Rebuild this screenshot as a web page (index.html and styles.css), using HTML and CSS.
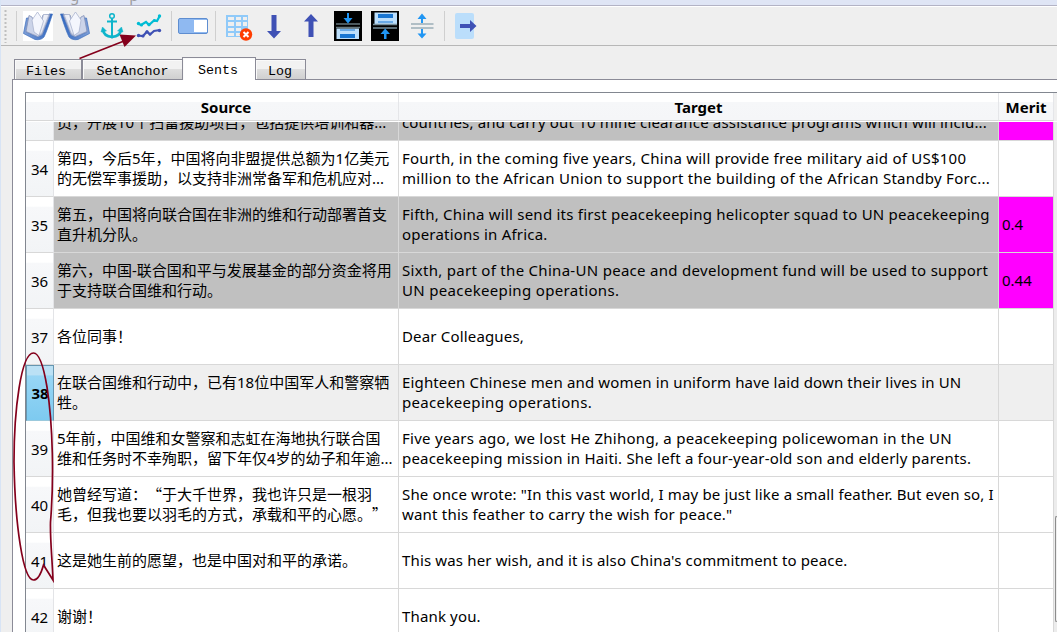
FILE: index.html
```
<!DOCTYPE html>
<html lang="zh-CN">
<head>
<meta charset="utf-8">
<title>Sents</title>
<link rel="stylesheet" href="styles.css">
</head>
<body>
<div class="window">
  <div class="titlebar"><span>g</span><span>p</span></div>
  <div class="toolbar">
    <svg width="1057" height="38" viewBox="0 8 1057 38">
      <defs>
        <linearGradient id="page" x1="0" y1="0" x2="1" y2="1"><stop offset="0" stop-color="#fff"/><stop offset="1" stop-color="#cfd5ea"/></linearGradient>
        <linearGradient id="cover" x1="0" y1="0" x2="1" y2="0"><stop offset="0" stop-color="#7f9fd6"/><stop offset="1" stop-color="#2f66c0"/></linearGradient>
        <g id="book">
          <path d="M26.500 18 L23.500 33.500 L35 39.500 Q41 40.500 44 37 Q47 31 52.500 14 L49 14 L42 35 L38 37 L27 32.500 L29 18Z" fill="url(#cover)" stroke="#3d6fbd" stroke-width=".7"/>
          <path d="M29 15.500 L26 31.500 L37.500 36.500 L42 34.500 L50 14.500 L43 15 L38 30 L32 17Z" fill="#ccd4e9" stroke="#8391b8" stroke-width=".8"/>
          <path d="M43.500 14.500 L49 14.500 L42 33 L38.500 35.500Z" fill="url(#page)" stroke="#99a5c5" stroke-width=".6"/>
          <path d="M37.500 12 L43.500 21 L39 35.500 L34 32 L32 20Z" fill="#f4f6fd" stroke="#a3adca" stroke-width=".7"/>
        </g>
      </defs>
      <path d="M5.500 10V43" stroke="#bfbfbf" stroke-width="2" stroke-dasharray="2 2"/>
      <path d="M16.500 11V41M171.500 11V41M215.500 11V41M444.500 11V41" stroke="#cfcfcf"/>
      <rect x="23" y="11" width="30" height="30" fill="#fff"/>
      <use href="#book"/>
      <use href="#book" transform="translate(113 0) scale(-1 1)"/>
      <g fill="none" stroke="#0eb5cb" stroke-width="2">
        <circle cx="112" cy="16" r="2.300" stroke-width="1.500"/>
        <path d="M112 18.500V36M107 21.500H117" />
        <path d="M103 30C103.500 34 107 36.500 112 37C117 36.500 120.500 34 121 30" stroke-width="2.600"/>
        <path d="M101 32L102.500 27L106.500 31ZM123 32L121.500 27L117.500 31Z" fill="#0eb5cb" stroke-width=".5"/>
        <path d="M109.500 36L112 38.500L114.500 36Z" fill="#0eb5cb" stroke-width=".5"/>
      </g>
      <g fill="none" stroke-width="2.200">
        <path d="M138 23.500L141 25L146 22L149 25L154 20.500L157 21L160 15.500" stroke="#00bcd4"/>
        <path d="M138 35.500L143 36L147 31.500L150 34.500L154 31L160 30" stroke="#3f51b5"/>
      </g>
      <g fill="#00bcd4"><circle cx="138.500" cy="23.500" r="1.700"/><circle cx="141.500" cy="25" r="1.500"/><circle cx="149" cy="24.500" r="1.700"/><circle cx="154.500" cy="20.500" r="1.500"/><circle cx="159.500" cy="16" r="1.700"/></g>
      <g fill="#3f51b5"><circle cx="138.500" cy="35.500" r="1.700"/><circle cx="143" cy="36" r="1.500"/><circle cx="147" cy="32" r="1.700"/><circle cx="150" cy="34" r="1.500"/><circle cx="159.500" cy="30.500" r="1.700"/></g>
      <rect x="178.500" y="18.500" width="29" height="15" rx="1.500" fill="#8fb9f1" stroke="#5e8dd0"/>
      <rect x="194" y="20" width="13" height="12" fill="#fff"/>
      <path d="M226 15H248V37H226Z M228 17V20H234V17ZM236 17V20H241V17ZM243 17V20H247V17ZM228 22V26H234V22ZM236 22V26H241V22ZM243 22V26H247V22ZM228 28V31H234V28ZM236 28V31H241V28ZM228 33V36H234V33ZM236 33V36H241V33Z" fill="#90caf9" fill-rule="evenodd"/>
      <circle cx="246" cy="34.500" r="6.200" fill="#ff3d00"/>
      <path d="M243.500 32L248.500 37M248.500 32L243.500 37" stroke="#fff" stroke-width="2"/>
      <path d="M271.500 15H276.500V31H281L274 38.500L267 31H271.500ZM308.500 37H313.500V21.500H318L311 14L304 21.500H308.500Z" fill="#3f51b5"/>
      <rect x="334" y="11" width="28" height="30"/>
      <path d="M336 24H360M336 27.500H360" stroke="#66777d" stroke-width="1.600"/>
      <path d="M336.500 28.500H359V39H336.500Z" fill="#bbdefb"/>
      <path d="M340 30H355" stroke="#1976d2"/><path d="M340 34H355V38H340Z" fill="#1976d2"/>
      <path d="M347 13H349V18H352.500L348 23.500L343.500 18H347Z" fill="#2196f3"/>
      <rect x="371" y="11" width="28" height="30"/>
      <path d="M374.500 12.500H397V24H374.500Z" fill="#bbdefb"/>
      <path d="M378 14H393V18H378Z" fill="#1976d2"/><path d="M378 22H393" stroke="#1976d2"/>
      <path d="M373 24.500H397M373 28H397" stroke="#78909c" stroke-width="1.600"/>
      <path d="M384 39H386.500V34H390L385.200 28.500L380.500 34H384Z" fill="#2196f3"/>
      <path d="M411 24H433.500M411 28H433.500" stroke="#b0bec5" stroke-width="2"/>
      <path d="M421 23V19H417.500L422 13.500L426.500 19H423V23ZM421 29V33.500H417.500L422 38.500L426.500 33.500H423V29Z" fill="#2196f3"/>
      <rect x="455" y="13" width="19" height="26" rx="2" fill="#bbdefb"/>
      <path d="M460 24H470V20L476.500 26L470 32V28H460Z" fill="#3f51b5"/>
    </svg>
  </div>
  <div class="tabs">
    <div class="tab files">Files</div>
    <div class="tab anchor">SetAnchor</div>
    <div class="tab active">Sents</div>
    <div class="tab log">Log</div>
  </div>
  <div class="pane">
    <div class="table">
      <div class="row head"><div class="num"></div><div class="src">Source</div><div class="tgt">Target</div><div class="merit">Merit</div><div class="corner"></div></div>
      <div class="viewport">
        <div class="rows">
          <div class="row low"><div class="num"></div><div class="src"><p>员，开展10个扫雷援助项目，包括提供培训和器...</p></div><div class="tgt"><p class="s17">countries, and carry out 10 mine clearance assistance programs which will inclu...</p></div><div class="merit"></div></div>
          <div class="row"><div class="num">34</div><div class="src"><p>第四，今后5年，中国将向非盟提供总额为1亿美元</p><p>的无偿军事援助，以支持非洲常备军和危机应对...</p></div><div class="tgt"><p class="s24">Fourth, in the coming five years, China will provide free military aid of US$100</p><p class="s27">million to the African Union to support the building of the African Standby Forc...</p></div><div class="merit"></div></div>
          <div class="row low"><div class="num">35</div><div class="src"><p>第五，中国将向联合国在非洲的维和行动部署首支</p><p>直升机分队。</p></div><div class="tgt"><p class="s24">Fifth, China will send its first peacekeeping helicopter squad to UN peacekeeping</p><p class="s20">operations in Africa.</p></div><div class="merit">0.4</div></div>
          <div class="row low"><div class="num">36</div><div class="src"><p>第六，中国-联合国和平与发展基金的部分资金将用</p><p>于支持联合国维和行动。</p></div><div class="tgt"><p class="s30">Sixth, part of the China-UN peace and development fund will be used to support</p><p class="s33">UN peacekeeping operations.</p></div><div class="merit">0.44</div></div>
          <div class="row"><div class="num">37</div><div class="src"><p>各位同事<span class="mid">！</span></p></div><div class="tgt"><p class="s17">Dear Colleagues,</p></div><div class="merit"></div></div>
          <div class="row current"><div class="num">38</div><div class="src"><p>在联合国维和行动中，已有18位中国军人和警察牺</p><p>牲。</p></div><div class="tgt"><p class="s15">Eighteen Chinese men and women in uniform have laid down their lives in UN</p><p class="s33">peacekeeping operations.</p></div><div class="merit"></div></div>
          <div class="row"><div class="num">39</div><div class="src"><p>5年前，中国维和女警察和志虹在海地执行联合国</p><p>维和任务时不幸殉职，留下年仅4岁的幼子和年逾...</p></div><div class="tgt"><p class="s27">Five years ago, we lost He Zhihong, a peacekeeping policewoman in the UN</p><p class="s20">peacekeeping mission in Haiti. She left a four-year-old son and elderly parents.</p></div><div class="merit"></div></div>
          <div class="row"><div class="num">40</div><div class="src"><p class="cjk">她曾经写道<span class="mid">：</span>“于大千世界，我也许只是一根羽</p><p class="cjk">毛，但我也要以羽毛的方式，承载和平的心愿。”</p></div><div class="tgt"><p class="s15">She once wrote: "In this vast world, I may be just like a small feather. But even so, I</p><p class="s20">want this feather to carry the wish for peace."</p></div><div class="merit"></div></div>
          <div class="row"><div class="num">41</div><div class="src"><p>这是她生前的愿望，也是中国对和平的承诺。</p></div><div class="tgt"><p class="s15">This was her wish, and it is also China's commitment to peace.</p></div><div class="merit"></div></div>
          <div class="row"><div class="num">42</div><div class="src"><p>谢谢<span class="mid">！</span></p></div><div class="tgt"><p class="s15">Thank you.</p></div><div class="merit"></div></div>
        </div>
        <div class="scrollbar"><div class="thumb"></div></div>
      </div>
    </div>
  </div>
  <svg class="marks" width="1057" height="632">
    <path d="M79.500 58.500L124 41" fill="none" stroke="#84001c" stroke-width="1.600"/>
    <path d="M119.500 34.500L136 35.500L124.500 47Z" fill="#84001c"/>
    <path d="M43.500 565L53 580C52 556 50 538 50.500 522C54 480 53 425 47 387C43 363 38 353 33.500 353C21 353 14 410 14 462C15 525 23 580 33.500 580C38 580 41 574 43.500 565Z" fill="none" stroke="#84001c" stroke-width="1.700"/>
  </svg>
</div>
</body>
</html>
```
FILE: styles.css
```
* { box-sizing: border-box; }
body { margin: 0; background: #efefef; color: #000; font-family: "Noto Sans", "Noto Sans CJK SC", sans-serif; font-size: 15px; overflow: hidden; text-spacing-trim: space-all; }
p { margin: 0; }
svg { display: block; }
.window { position: relative; width: 1057px; height: 632px; border-left: 1px solid #d8e4f5; overflow: hidden; display: flex; flex-direction: column; }
.titlebar { height: 6px; flex: none; display: flex; gap: 50px; padding-left: 69px; background: #dfe5f5; border-bottom: 1px solid #b3b3c5; font-size: 15px; line-height: 3px; color: #9c9ca0; overflow: hidden; box-shadow: 0 1px #fff; }
.titlebar span { margin-top: -6px; }
.toolbar { height: 40px; flex: none; padding-top: 2px; border-bottom: 1px solid #b7b7b7; }
.toolbar svg { margin-left: -1px; }
.tabs { height: 33px; flex: none; display: flex; align-items: flex-end; padding-left: 13px; position: relative; font-family: "Liberation Mono", monospace; font-size: 13.333px; }
.tab { height: 20px; border: 1px solid #8b8b97; border-bottom: 0; background: linear-gradient(#f2f2f2 0 45%, #dedede 50%, #d0d0d0); text-align: center; line-height: 23px; box-shadow: inset 1px 1px #fafafa; }
.files { width: 68px; padding-right: 4px; }
.anchor { width: 100px; border-right: 0; }
.active { width: 74px; height: 23px; margin-bottom: -1px; background: #fff; line-height: 25px; padding-right: 2px; }
.log { width: 50px; border-left: 0; padding-right: 1px; }
.pane { flex: 1; margin-left: 11px; border: 1px solid #8b8b97; border-width: 1px 0 0 1px; background: #fff; padding: 12px 0 0 12px; }
.table { border: 1px solid #828790; border-width: 1px 0 0 1px; height: 540px; }
.row { display: flex; height: 56px; width: 1028px; }
.row > div { border-right: 1px solid #d8d8d8; border-bottom: 1px solid #d8d8d8; flex: none; }
.num { width: 28px; }
.row > .num { border-color: #e3e4e7; border-bottom-color: #d8d8d8; background: linear-gradient(#fff 0 17%, #f7f8fa 18%, #f2f4f6); display: flex; align-items: center; justify-content: center; }
.src { width: 345px; padding-left: 3px; }
.tgt { width: 600px; padding-left: 3px; }
.merit { width: 55px; padding-left: 3px; }
.rows .src, .rows .tgt, .rows .merit { display: flex; flex-direction: column; justify-content: center; line-height: 20px; white-space: nowrap; padding-bottom: 2px; }
.row.head { width: auto; height: 28px; font-weight: bold; line-height: 29px; text-align: center; }
.row.head > div { padding: 0; background: linear-gradient(#fff 0 33%, #f6f7f9 34%, #f5f6f8); border-right-color: #e5e6e9; }
.row.head > .corner { flex: 1; background: #f0f0f0; border: 0; }
.viewport { height: 511px; margin-top: 1px; overflow: hidden; display: flex; }
.rows { margin-top: -37px; flex: none; }
.rows .row:first-child > div { padding-top: 20px; }
.low .src, .low .tgt { background: #c0c0c0; }
.low .merit { background: #f0f; }
.current .src, .current .tgt, .current .merit { background: #efefef; }
.row.current > .num { font-weight: bold; background: linear-gradient(#bbe1f5 0 17%, #98d6f5 18%, #7dcaf0); border: 1px solid #6696b0; border-bottom-color: #9bc9dc; }
.cjk { font-family: "Noto Sans CJK SC", sans-serif; }
.mid { font-family: "Noto Sans CJK TC", sans-serif; line-height: 1; }
.s15 { letter-spacing: .15px; }
.s17 { letter-spacing: .17px; }
.s20 { letter-spacing: .2px; }
.s24 { letter-spacing: .24px; }
.s27 { letter-spacing: .27px; }
.s30 { letter-spacing: .295px; }
.s33 { letter-spacing: .33px; }
.scrollbar { flex: 1; margin-top: -1px; background: #ececec; padding: 395px 0 0 1px; }
.thumb { height: 106px; border: 1px solid #8c8c8c; border-right: 0; border-radius: 2px 0 0 2px; background: #efefef; }
.marks { position: absolute; left: -1px; top: 0; }
```
